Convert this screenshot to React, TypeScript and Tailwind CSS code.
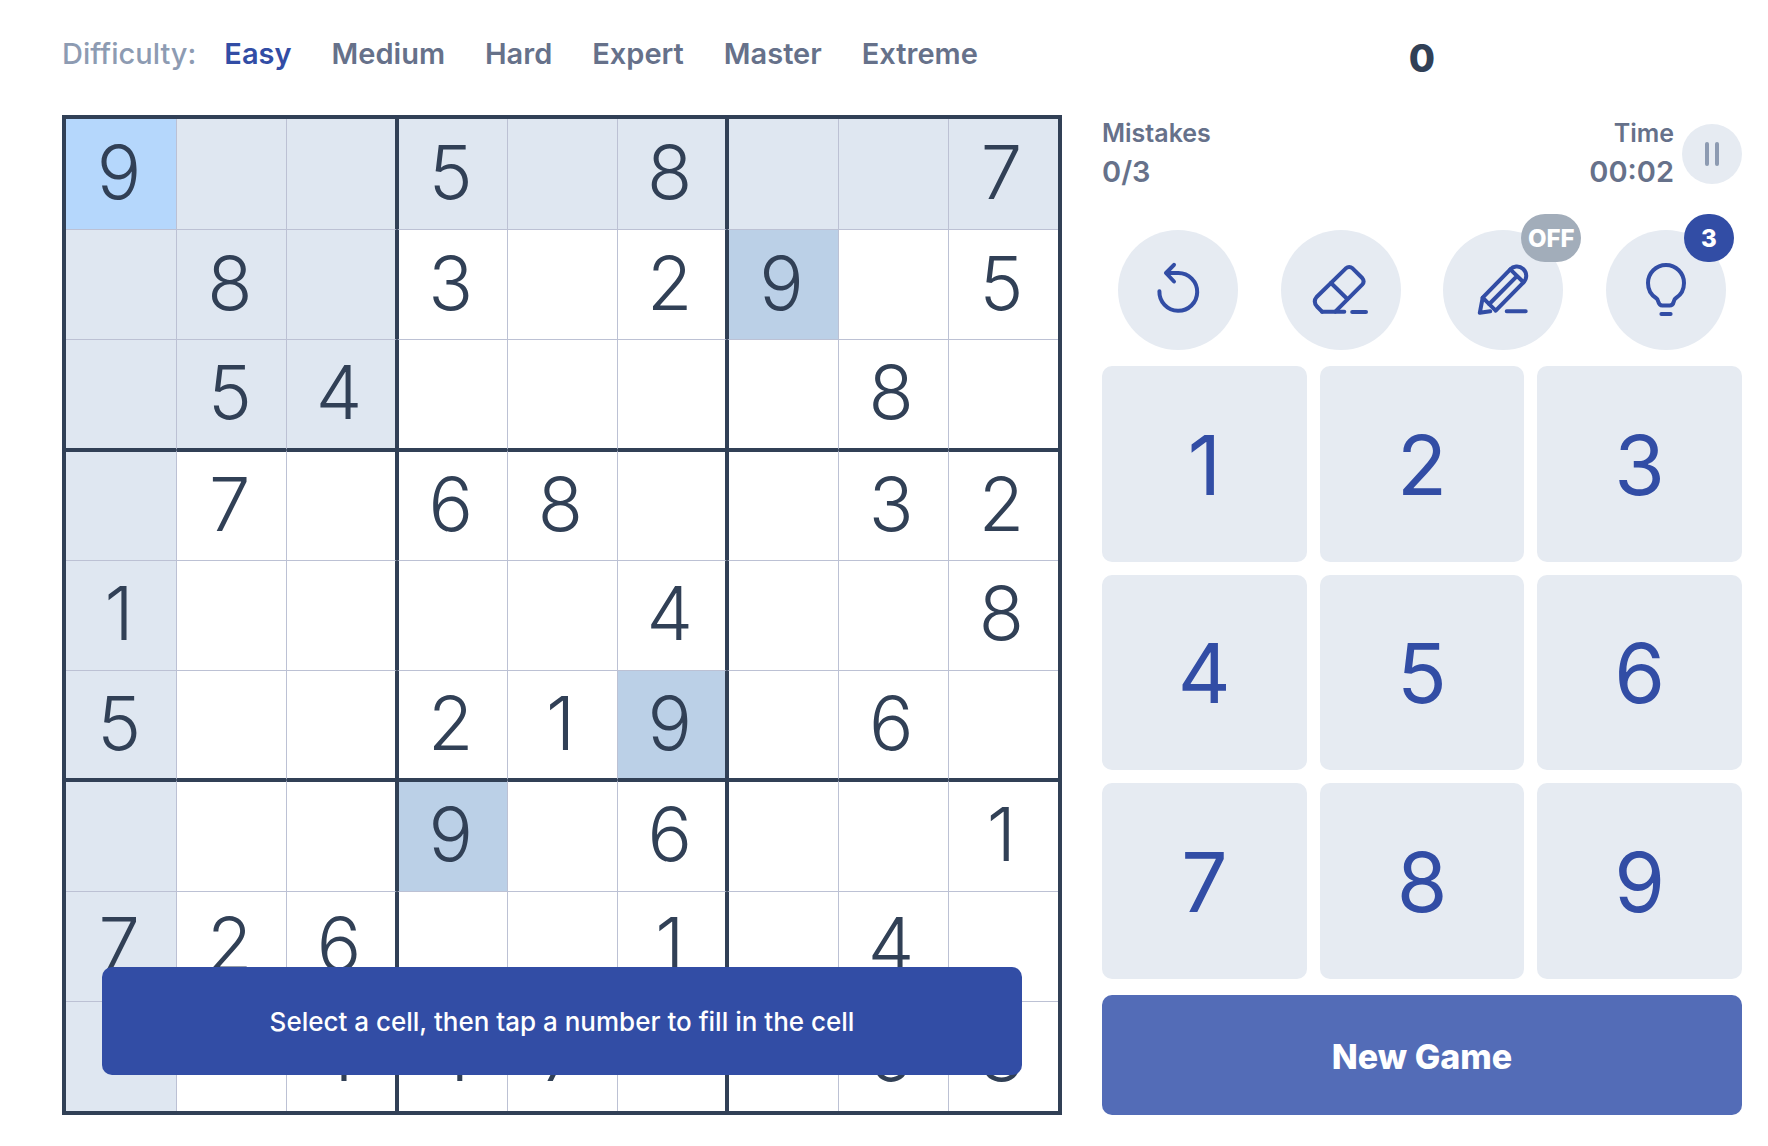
import { useState } from 'react';
import { clsx, type ClassValue } from 'clsx';
import { twMerge } from 'tailwind-merge';

function cn(...inputs: ClassValue[]) {
  return twMerge(clsx(inputs));
}

const LEVELS = ['Easy', 'Medium', 'Hard', 'Expert', 'Master', 'Extreme'];

// One string per row, dots are empty cells
const PUZZLE = [
  '9..5.8..7',
  '.8.3.29.5',
  '.54....8.',
  '.7.68..32',
  '1....4..8',
  '5..219.6.',
  '...9.6..1',
  '726..1.4.',
  '..147..53',
];

const ICON_PROPS = {
  viewBox: '0 0 60 60',
  fill: 'none',
  stroke: 'currentColor',
  strokeWidth: 4,
  strokeLinecap: 'round',
  strokeLinejoin: 'round',
  className: 'h-[60px] w-[60px]',
  'aria-hidden': true,
} as const;

function UndoIcon() {
  return (
    <svg {...ICON_PROPS}>
      <path d="M11.4 31.3A18.9 18.9 0 1 0 30.3 13H18.5" />
      <path d="M26 4.8L18 13l8 8.5" />
    </svg>
  );
}

function EraserIcon() {
  return (
    <svg {...ICON_PROPS}>
      <path d="M11 51.7l-5-5.2Q1.8 41.5 5.6 37L34.6 8.6Q38.2 5.4 41.8 8.6L51.2 18Q54 21.5 51.2 24.6L24.3 51.7" />
      <path d="M11 51.7H33.3M20 23l16.3 16M41.2 52H55" />
    </svg>
  );
}

function PencilIcon() {
  return (
    <svg {...ICON_PROPS}>
      <path d="M9.7 37.7L37.3 9.4C40 6.4 45.8 5 50.2 9S53.8 19.2 50.5 22.3L22.7 50.7z" />
      <path d="M37.3 9.4l13.2 12.9M43.7 16.3L16.3 44" />
      <path d="M9.7 37.7L6.8 52.8l10.4-1.6M33.7 51.3H52.7" />
    </svg>
  );
}

function BulbIcon() {
  return (
    <svg {...ICON_PROPS}>
      <path d="M20 38C15 34.8 12 29.6 12 23a18 18 0 0 1 36 0C48 29.6 45 34.8 40 38 38.4 39 38.2 39.8 37.8 41.4 37.2 44 36 45.6 33.6 45.6H26.4C24 45.6 22.8 44 22.2 41.4 21.8 39.8 21.6 39 20 38z" />
      <path d="M25.4 54h9.2" />
    </svg>
  );
}

const TOOLS = [
  { name: 'Undo', Icon: UndoIcon },
  { name: 'Erase', Icon: EraserIcon },
  { name: 'Notes', Icon: PencilIcon, badge: 'OFF', badgeClass: 'w-[60px] bg-[#a2adba]' },
  { name: 'Hint', Icon: BulbIcon, badge: '3', badgeClass: 'w-[50px] bg-[#324da5]' },
];

export default function App() {
  const [level, setLevel] = useState('Easy');
  const [selected, setSelected] = useState({ row: 0, col: 0 });

  const selectedValue = PUZZLE[selected.row][selected.col];

  const cellColor = (row: number, col: number) => {
    if (row === selected.row && col === selected.col) return 'bg-[#b5d7fc]';
    if (selectedValue !== '.' && PUZZLE[row][col] === selectedValue) return 'bg-[#bbd0e7]';
    const sameBox =
      Math.floor(row / 3) === Math.floor(selected.row / 3) &&
      Math.floor(col / 3) === Math.floor(selected.col / 3);
    if (row === selected.row || col === selected.col || sameBox) return 'bg-[#dfe7f1]';
    return 'bg-white';
  };

  return (
    <div className="min-h-screen bg-white pb-8 pl-[62px] pr-[26px] font-['Inter',sans-serif] text-[#314056]">
      <div className="grid grid-cols-[25fr_16fr] gap-x-10">
        {/* Difficulty and score */}
        <nav className="flex h-[115px] items-center pb-2 text-[29px] font-semibold text-[#66718a]">
          <span className="mr-7 font-medium text-[#8d9bb2]">Difficulty:</span>
          <div className="flex gap-10">
            {LEVELS.map((name) => (
              <button
                key={name}
                type="button"
                onClick={() => setLevel(name)}
                className={cn(name === level && 'text-[#324da5]')}
              >
                {name}
              </button>
            ))}
          </div>
        </nav>
        <div className="flex h-[115px] items-center justify-center pt-0.5 text-[38px] font-extrabold">0</div>

        {/* Board */}
        <main className="relative aspect-square">
          <table className="h-full w-full table-fixed border-separate border-spacing-0 border-4 border-[#314056]">
            <tbody>
              {PUZZLE.map((line, row) => (
                <tr key={row} className="h-[calc(100%/9)]">
                  {line.split('').map((value, col) => (
                    <td
                      key={col}
                      onClick={() => setSelected({ row, col })}
                      className={cn(
                        'border-[#bcc1d4] p-0 pr-1 pb-1 text-center align-middle text-[74px] leading-none font-light',
                        col > 0 && 'border-l',
                        row > 0 && 'border-t',
                        (col === 2 || col === 5) && 'border-r-2 border-r-[#314056]',
                        (col === 3 || col === 6) && 'border-l-2 border-l-[#314056]',
                        (row === 2 || row === 5) && 'border-b-2 border-b-[#314056]',
                        (row === 3 || row === 6) && 'border-t-2 border-t-[#314056]',
                        cellColor(row, col)
                      )}
                    >
                      {value === '.' ? '' : value}
                    </td>
                  ))}
                </tr>
              ))}
            </tbody>
          </table>
          <div
            role="status"
            className="absolute inset-x-10 bottom-10 flex h-[108px] items-center justify-center rounded-[10px] bg-[#324da5] text-[26px] font-medium text-white"
          >
            Select a cell, then tap a number to fill in the cell
          </div>
        </main>

        {/* Controls */}
        <aside className="flex flex-col">
          <div className="flex h-[115px] items-start justify-between text-[#66718a]">
            <div>
              <p className="text-[25px] leading-[36px] font-semibold">Mistakes</p>
              <p className="text-[29px] leading-[42px] font-semibold">0/3</p>
            </div>
            <div className="flex items-center gap-2">
              <div className="text-right">
                <p className="text-[25px] leading-[36px] font-semibold">Time</p>
                <p className="text-[29px] leading-[42px] font-semibold">00:02</p>
              </div>
              <button
                type="button"
                aria-label="Pause"
                className="flex h-[60px] w-[60px] items-center justify-center gap-1.5 rounded-full bg-[#e6ebf2]"
              >
                <span className="h-6 w-1 rounded-full bg-[#8d9bb2]"></span>
                <span className="h-6 w-1 rounded-full bg-[#8d9bb2]"></span>
              </button>
            </div>
          </div>

          <div className="flex justify-between px-4">
            {TOOLS.map(({ name, Icon, badge, badgeClass }) => (
              <button
                key={name}
                type="button"
                aria-label={name}
                className="relative flex h-[120px] w-[120px] items-center justify-center rounded-full bg-[#e6ebf2] text-[#324da5]"
              >
                <Icon />
                {badge && (
                  <span
                    className={cn(
                      'absolute -top-4 left-[78px] flex h-12 items-center justify-center rounded-full pt-0.5 text-[24px] font-extrabold text-white',
                      badgeClass
                    )}
                  >
                    {badge}
                  </span>
                )}
              </button>
            ))}
          </div>

          <div className="mt-4 grid grow grid-cols-3 grid-rows-3 gap-[13px]">
            {[1, 2, 3, 4, 5, 6, 7, 8, 9].map((n) => (
              <button
                key={n}
                type="button"
                className="rounded-[10px] bg-[#e6ebf2] pt-1 text-[82px] leading-none text-[#324da5]"
              >
                {n}
              </button>
            ))}
          </div>

          <button
            type="button"
            className="mt-4 h-[120px] rounded-[10px] bg-[#536cb7] pt-0.5 text-[34px] font-extrabold text-white"
          >
            New Game
          </button>
        </aside>
      </div>
    </div>
  );
}
